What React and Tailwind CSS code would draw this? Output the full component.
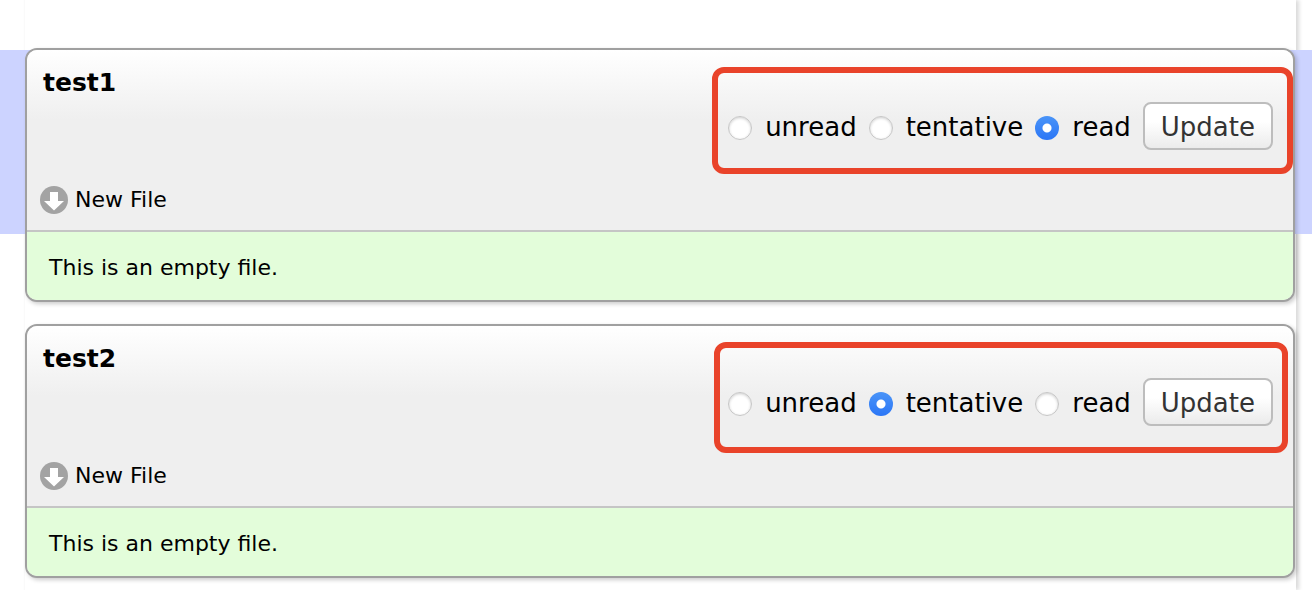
import { useState } from "react";

const STATUSES = ["unread", "tentative", "read"];

const FILES = [
  { name: "test1", status: "read", selected: true, callout: "top-[17px] left-[-16px] right-[-20px] h-[107px]" },
  { name: "test2", status: "tentative", selected: false, callout: "top-4 left-[-14px] right-[-15px] h-[111px]" },
];

function DownIcon() {
  return (
    <svg viewBox="0 0 28 28" className="size-7 shrink-0" aria-hidden="true">
      <circle cx="14" cy="14" r="14" fill="#a3a3a3" />
      <path d="M10 6h8v9h6L14 24.5 4 15h6z" fill="#fff" />
    </svg>
  );
}

function FileCard({ file }) {
  const [status, setStatus] = useState(file.status);
  return (
    <section
      className={
        "relative pl-[25px] pr-[17px] " +
        (file.selected
          ? "bg-[linear-gradient(#ccd3ff,#ccd3ff)] bg-[length:100%_184px] bg-[position:0_2px] bg-no-repeat"
          : "")
      }
    >
      <div className="overflow-hidden rounded-xl border-2 border-[#a0a0a0] bg-[#efefef] shadow-[2px_2px_4px_rgba(0,0,0,0.2)]">
        <header className="flex h-[182px] justify-between border-b-2 border-[#c5c5c5] bg-[linear-gradient(#ffffff,#efefef_70px)] pl-[13px] pr-5">
          <div className="flex flex-col justify-between pt-[17px] pb-4">
            <h2 className="pl-[3px] text-[25px] leading-8 font-bold">{file.name}</h2>
            <div className="flex items-center gap-[7px] text-[22px] leading-7">
              <DownIcon />
              <span className="pt-px">New File</span>
            </div>
          </div>
          <form className="relative pt-[52px]" onSubmit={(e) => e.preventDefault()}>
            <div className="flex items-center gap-3 text-[26px] leading-8">
              {STATUSES.map((s) => (
                <label key={s} className="flex items-center gap-[13px]">
                  <input
                    type="radio"
                    name={file.name + "-status"}
                    checked={status === s}
                    onChange={() => setStatus(s)}
                    className="mt-1 size-6 appearance-none rounded-full border border-[#c6c6c6] bg-white shadow-[inset_0_1px_3px_rgba(0,0,0,0.2)] checked:border-0 checked:bg-[radial-gradient(circle,#ffffff_4px,transparent_5px),linear-gradient(#4a94f8,#2b76f6)] checked:shadow-none"
                  />
                  <span className="pt-0.5">{s}</span>
                </label>
              ))}
              <button
                type="submit"
                className="h-12 rounded-lg border-2 border-[#bdbdbd] bg-linear-to-b from-white from-40% to-[#ebebeb] px-4 pt-0.5 text-[#333333]"
              >
                Update
              </button>
            </div>
            <div
              className={"pointer-events-none absolute rounded-xl border-6 border-[#e9432a] " + file.callout}
            />
          </form>
        </header>
        <p className="bg-[#e3fdda] px-[22px] pt-[22px] pb-[18px] text-[22px] leading-7">This is an empty file.</p>
      </div>
    </section>
  );
}

export default function App() {
  return (
    <main
      className="relative isolate flex min-h-screen flex-col gap-[22px] bg-white pt-12 text-black"
      style={{ fontFamily: 'Verdana, "DejaVu Sans", sans-serif' }}
    >
      <div className="absolute inset-y-0 right-4 left-6 -z-10 border-l border-[#fafafa] bg-white shadow-[3px_0_4px_rgba(0,0,0,0.15)]" />
      {FILES.map((f) => (
        <FileCard key={f.name} file={f} />
      ))}
    </main>
  );
}
